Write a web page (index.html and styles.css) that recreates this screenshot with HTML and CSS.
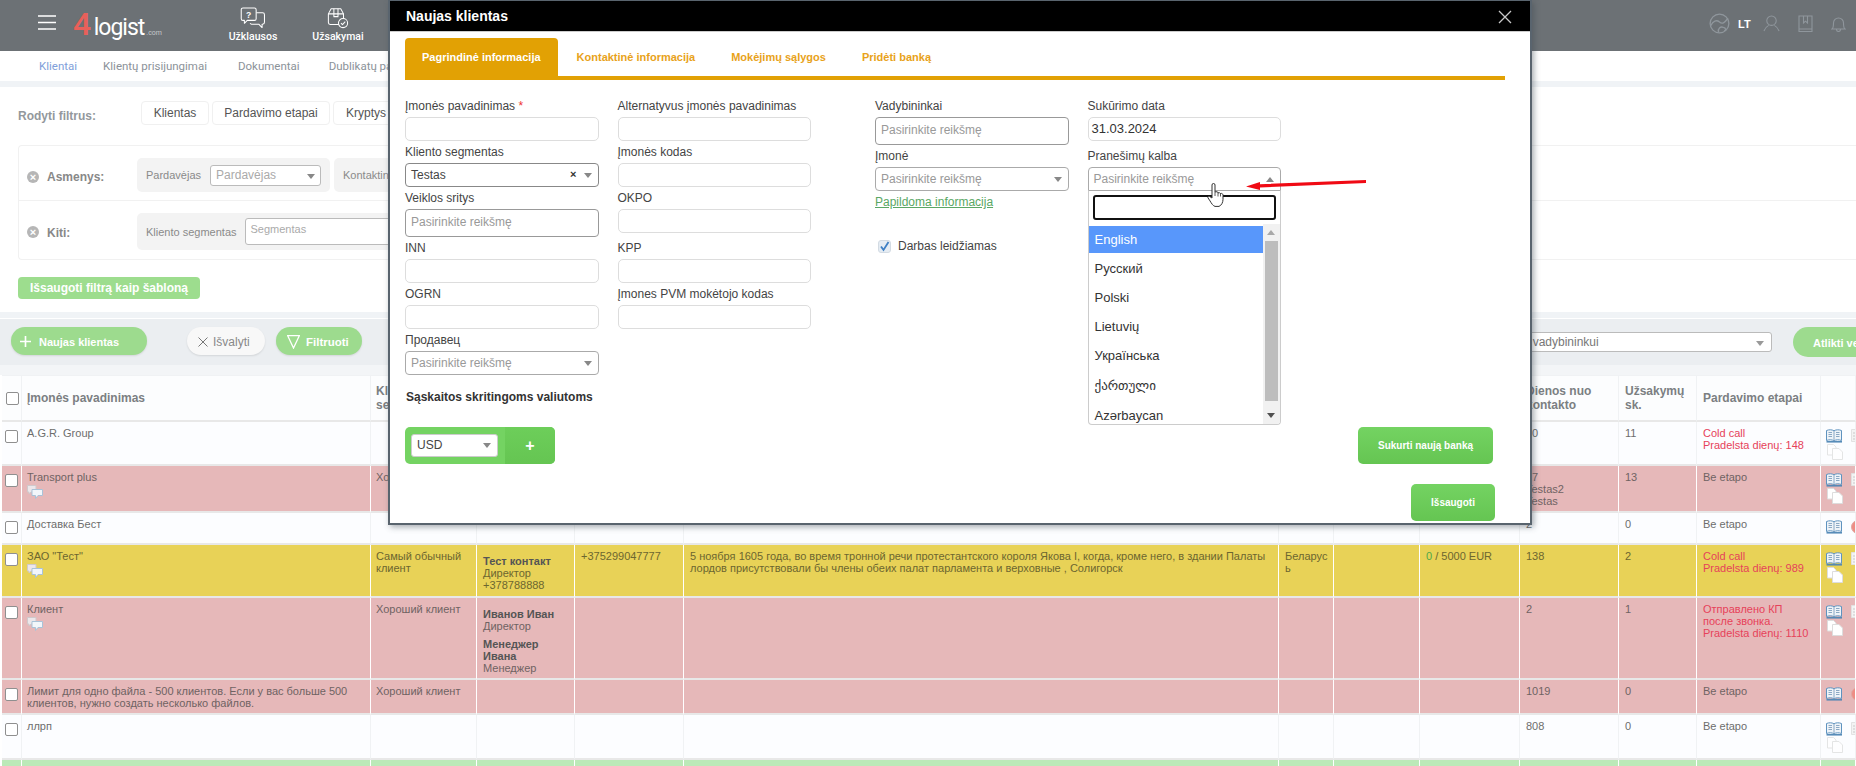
FILE: index.html
```html
<!DOCTYPE html>
<html lang="lt">
<head>
<meta charset="utf-8">
<title>Klientai</title>
<link rel="stylesheet" href="styles.css">
</head>
<body>
<div class="page">
  <header class="topbar">
    <svg class="burger" viewBox="0 0 18 15" width="18" height="15"><path d="M0 1h18M0 7.5h18M0 14h18" stroke="#fff" stroke-width="1.4" fill="none"/></svg>
    <div class="logo"><span class="logo-four">4</span><span class="logo-word">logist</span><span class="logo-com">.com</span></div>
    <nav class="mainnav">
      <a class="mainnav-item first">
        <svg viewBox="0 0 26 23" width="26" height="23" fill="none" stroke="#fff" stroke-width="1.1" stroke-linejoin="round"><path d="M2.5 1h12a1.8 1.8 0 0 1 1.8 1.8v9.400a1.800 1.800 0 0 1-1.800 1.800H7l-3 3v-3H2.500A1.800 1.800 0 0 1 .7 12.200V2.800A1.800 1.800 0 0 1 2.500 1z"/><path d="M16.500 6h6.500a2 2 0 0 1 2 2v8a2 2 0 0 1-2 2h-.5v3.500l-3.500-3.500h-7.500a2 2 0 0 1-1.500-1"/><text x="8.500" y="11" font-size="9" font-weight="700" fill="#fff" stroke="none" text-anchor="middle" font-family="Liberation Sans">?</text></svg>
        <span>Užklausos</span>
      </a>
      <a class="mainnav-item second">
        <svg viewBox="0 0 24 24" width="24" height="24" fill="none" stroke="#fff" stroke-width="1.1" stroke-linejoin="round"><path d="M13 19H3.500A2 2 0 0 1 1.500 17V7.500L4.500 2h10.500l3 5.500v5"/><path d="M1.500 7.500h16.500M7.500 2v8.500h4.500V2"/><circle cx="17.500" cy="17.500" r="5"/><path d="M15.200 17.500l1.700 1.700 3-3.200"/></svg>
        <span>Užsakymai</span>
      </a>
    </nav>
    <div class="topright">
      <svg viewBox="0 0 22 22" width="21" height="21" fill="none" stroke="#8f969c" stroke-width="1.4"><circle cx="11" cy="11" r="9.800"/><path d="M2 13c2-5 6-6 9-3.500s5 1 9-4M10 20c-1-4 2-6 5-5 3 .5 3 3 1 4"/></svg>
      <span class="lang">LT</span>
      <svg class="tr-user" viewBox="0 0 18 18" width="17" height="17" fill="none" stroke="#8f969c" stroke-width="1.1"><circle cx="9" cy="6" r="5"/><path d="M1 17c1.500-4 4-5.500 5-6M17 17c-1.500-4-4-5.500-5-6"/></svg>
      <svg class="tr-book" viewBox="0 0 15 17" width="15" height="17" fill="none" stroke="#8f969c" stroke-width="1.1"><path d="M1 1h13v13H1zM1 14v2.500h13V14M5.500 1v7l2-1.800 2 1.800V1"/></svg>
      <svg class="tr-bell" viewBox="0 0 15 17" width="15" height="17" fill="none" stroke="#8f969c" stroke-width="1.1"><path d="M1 14c1.500-1 1.500-3 1.500-6a5 5 0 0 1 10 0c0 3 0 5 1.500 6zM5.500 14.500a2 2 0 0 0 4 0"/></svg>
    </div>
  </header>

  <nav class="subnav">
    <a class="active">Klientai</a>
    <a>Klientų prisijungimai</a>
    <a class="sub-doc">Dokumentai</a>
    <a class="sub-dub">Dublikatų paieška</a>
  </nav>

  <section class="panel">
    <div class="chips-row">
      <span class="chips-title">Rodyti filtrus:</span>
      <span class="chip chip-a">Klientas</span>
      <span class="chip chip-b">Pardavimo etapai</span>
      <span class="chip chip-c">Kryptys</span>
    </div>
    <div class="filterbox">
      <div class="filterrow row-a">
        <span class="xicon">×</span><span class="filtername">Asmenys:</span>
        <div class="fbox fbox-a"><span class="fl">Pardavėjas</span><span class="fsel">Pardavėjas</span></div>
        <div class="fbox fbox-b"><span class="fl">Kontaktinis asmuo</span></div>
      </div>
      <div class="filterrow row-b">
        <span class="xicon">×</span><span class="filtername">Kiti:</span>
        <div class="fbox fbox-c"><span class="fl">Kliento segmentas</span><span class="finput">Segmentas</span></div>
      </div>
    </div>
    <button class="savefilter">Išsaugoti filtrą kaip šabloną</button>
  </section>

  <section class="toolbar">
    <button class="pill pill-new"><svg viewBox="0 0 12 12" width="11" height="11"><path d="M6 0v12M0 6h12" stroke="#fff" stroke-width="1.800"/></svg>Naujas klientas</button>
    <button class="pill pill-clear"><svg viewBox="0 0 10 10" width="10" height="10"><path d="M.5.5l9 9M9.500.5l-9 9" stroke="#777" stroke-width="1"/></svg>Išvalyti</button>
    <button class="pill pill-filter"><svg viewBox="0 0 13 14" width="13" height="14" fill="none"><path d="M.7.7h11.600L6.500 13z" stroke="#fff" stroke-width="1.300"/></svg>Filtruoti</button>
    <div class="assign">Priskirti vadybininkui</div>
    <button class="pill pill-act">Atlikti veiksmus</button>
  </section>

  <table class="grid">
    <colgroup>
      <col class="c1"><col class="c2"><col class="c3"><col class="c4"><col class="c5"><col class="c6"><col class="c7"><col class="c8"><col class="c9"><col class="c10"><col class="c11"><col class="c12"><col class="c13">
    </colgroup>
    <thead>
      <tr class="rh">
        <th class="cb"><span class="check hcheck"></span></th><th>Įmonės pavadinimas</th><th>Kliento segmentas</th><th></th><th></th><th></th><th></th><th></th><th></th><th>Dienos nuo kontakto</th><th>Užsakymų sk.</th><th>Pardavimo etapai</th><th></th>
      </tr>
    </thead>
    <tbody>
      <tr class="r1">
        <td class="cb"><span class="check"></span></td><td>A.G.R. Group</td><td></td><td></td><td></td><td></td><td></td><td></td><td></td><td>10</td><td>11</td><td class="late">Cold call<br>Pradelsta dienų: 148</td>
        <td class="act"><svg class="i-book"><use href="#book"/></svg><svg class="i-sq"><use href="#sq"/></svg><svg class="i-copy faint"><use href="#copy"/></svg></td>
      </tr>
      <tr class="r2 pink">
        <td class="cb"><span class="check"></span></td><td>Transport plus<svg class="i-chat"><use href="#chat"/></svg></td><td>Хороший клиент</td><td></td><td></td><td></td><td></td><td></td><td></td><td>17<br>Testas2<br>Testas</td><td>13</td><td>Be etapo</td>
        <td class="act"><svg class="i-book"><use href="#book"/></svg><svg class="i-sq"><use href="#sq"/></svg><svg class="i-copy"><use href="#copy"/></svg></td>
      </tr>
      <tr class="r3">
        <td class="cb"><span class="check"></span></td><td>Доставка Бест</td><td></td><td></td><td></td><td></td><td></td><td></td><td></td><td>2</td><td>0</td><td>Be etapo</td>
        <td class="act"><svg class="i-book"><use href="#book"/></svg><span class="i-del"></span></td>
      </tr>
      <tr class="r4 yellow">
        <td class="cb"><span class="check"></span></td><td>ЗАО "Тест"<svg class="i-chat"><use href="#chat"/></svg></td><td>Самый обычный клиент</td><td class="contact"><b>Тест контакт</b><br>Директор<br>+378788888</td><td>+375299047777</td><td>5 ноября 1605 года, во время тронной речи протестантского короля Якова I, когда, кроме него, в здании Палаты лордов присутствовали бы члены обеих палат парламента и верховные , Солигорск</td><td class="brk">Беларусь</td><td></td><td><span class="zero">0</span> / 5000 EUR</td><td>138</td><td>2</td><td class="late">Cold call<br>Pradelsta dienų: 989</td>
        <td class="act"><svg class="i-book"><use href="#book"/></svg><svg class="i-sq"><use href="#sq"/></svg><svg class="i-copy"><use href="#copy"/></svg></td>
      </tr>
      <tr class="r5 pink">
        <td class="cb"><span class="check"></span></td><td>Клиент<svg class="i-chat"><use href="#chat"/></svg></td><td>Хороший клиент</td><td class="contact"><b>Иванов Иван</b><br>Директор<div class="contact2"><b>Менеджер<br>Ивана</b><br>Менеджер</div></td><td></td><td></td><td></td><td></td><td></td><td>2</td><td>1</td><td class="late">Отправлено КП<br>после звонка.<br>Pradelsta dienų: 1110</td>
        <td class="act"><svg class="i-book"><use href="#book"/></svg><svg class="i-sq"><use href="#sq"/></svg><svg class="i-copy"><use href="#copy"/></svg></td>
      </tr>
      <tr class="r6 pink">
        <td class="cb"><span class="check"></span></td><td>Лимит для одно файла - 500 клиентов. Если у вас больше 500 клиентов, нужно создать несколько файлов.</td><td>Хороший клиент</td><td></td><td></td><td></td><td></td><td></td><td></td><td>1019</td><td>0</td><td>Be etapo</td>
        <td class="act"><svg class="i-book"><use href="#book"/></svg><span class="i-del"></span></td>
      </tr>
      <tr class="r7">
        <td class="cb"><span class="check"></span></td><td>ллрп</td><td></td><td></td><td></td><td></td><td></td><td></td><td></td><td>808</td><td>0</td><td>Be etapo</td>
        <td class="act"><svg class="i-book"><use href="#book"/></svg><svg class="i-sq"><use href="#sq"/></svg><svg class="i-copy faint"><use href="#copy"/></svg></td>
      </tr>
      <tr class="r8 green">
        <td></td><td></td><td></td><td></td><td></td><td></td><td></td><td></td><td></td><td></td><td></td><td></td><td></td>
      </tr>
    </tbody>
  </table>

  <svg class="defs" width="0" height="0">
    <symbol id="book" viewBox="0 0 16 14"><path d="M.5 11.500V1.500C3 .5 6 .5 8 1.800 10 .5 13 .5 15.500 1.500v10C13 10.500 10 10.500 8 11.800 6 10.500 3 10.500.5 11.500z" fill="#eef3f8" stroke="#5f93bf" stroke-width="1"/><path d="M8 1.800v10M2.500 3.500h3.500M2.500 5.500h3.500M2.500 7.500h3.500M10 3.500h3.500M10 5.500h3.500M10 7.500h3.500" stroke="#8aa8c4" stroke-width="1" fill="none"/><path d="M.5 12.800h15.500" stroke="#4f86b5" stroke-width="1.500"/></symbol>
    <symbol id="sq" viewBox="0 0 10 14"><path d="M.5.5h12v12H.5z" fill="#f3f3f3" stroke="#e2e2e2"/><path d="M2 4h10M2 7h10M2 10h10" stroke="#c9c9c9"/></symbol>
    <symbol id="copy" viewBox="0 0 16 16"><path d="M.5.5h6l2.500 2.500v8H.5z" fill="#fff" stroke="#ddd"/><path d="M5.500 4.500h6.500l3.500 3.500v7.500H5.500z" fill="#fff" stroke="#ddd"/></symbol>
    <symbol id="chat" viewBox="0 0 16 14"><path d="M.5.5h8.500v6.500H4l-2 2V7H.5z" fill="#ece7ea" stroke="#cfc9cc"/><path d="M5 4.500h10.500v6h-4.500l-2.500 3v-3H5z" fill="#f2f6fa" stroke="#a9c3d8"/></symbol>
  </svg>

  <div class="modal">
    <div class="modal-title">Naujas klientas
      <svg class="modal-close" viewBox="0 0 14 14" width="14" height="14"><path d="M1 1l12 12M13 1L1 13" stroke="#c8c8c8" stroke-width="1.300"/></svg>
    </div>
    <div class="tabs">
      <a class="tab tab-on">Pagrindinė informacija</a>
      <a class="tab tab-second">Kontaktinė informacija</a>
      <a class="tab">Mokėjimų sąlygos</a>
      <a class="tab">Pridėti banką</a>
    </div>
    <div class="formarea">
      <div class="formgrid">
        <div class="field"><label>Įmonės pavadinimas <em>*</em></label><div class="inp"></div></div>
        <div class="field"><label>Alternatyvus įmonės pavadinimas</label><div class="inp"></div></div>
        <div class="field"><label>Kliento segmentas</label><div class="sel dark">Testas<i class="clr">×</i></div></div>
        <div class="field"><label>Įmonės kodas</label><div class="inp"></div></div>
        <div class="field"><label>Veiklos sritys</label><div class="multi">Pasirinkite reikšmę</div></div>
        <div class="field"><label>OKPO</label><div class="inp"></div></div>
        <div class="field"><label>INN</label><div class="inp"></div></div>
        <div class="field"><label>KPP</label><div class="inp"></div></div>
        <div class="field"><label>OGRN</label><div class="inp"></div></div>
        <div class="field"><label>Įmones PVM mokėtojo kodas</label><div class="inp"></div></div>
        <div class="field"><label>Продавец</label><div class="sel">Pasirinkite reikšmę</div></div>
      </div>
      <div class="formside">
        <div class="formgrid side">
          <div class="field"><label>Vadybininkai</label><div class="multi">Pasirinkite reikšmę</div></div>
          <div class="field"><label>Sukūrimo data</label><div class="inp val">31.03.2024</div></div>
          <div class="field"><label>Įmonė</label><div class="sel">Pasirinkite reikšmę</div><a class="morelink">Papildoma informacija</a>
            <div class="allowed"><span class="tick"><svg viewBox="0 0 13 13" width="13" height="13"><path d="M3 6.500l2.500 3.500 5-8" fill="none" stroke="#3e7fc4" stroke-width="1.800"/></svg></span>Darbas leidžiamas</div>
          </div>
          <div class="field langfield"><label>Pranešimų kalba</label><div class="sel open">Pasirinkite reikšmę</div>
            <div class="drop">
              <div class="dropsearch"></div>
              <div class="droplist">
                <ul>
                  <li class="hl">English</li>
                  <li>Русский</li>
                  <li>Polski</li>
                  <li>Lietuvių</li>
                  <li>Українська</li>
                  <li class="li-ka">ქართული</li>
                  <li class="li-az">Azərbaycan</li>
                </ul>
                <div class="scroll"><span class="sc-up"></span><span class="sc-thumb"></span><span class="sc-dn"></span></div>
              </div>
            </div>
          </div>
        </div>
      </div>
    </div>
    <h4 class="accounts">Sąskaitos skritingoms valiutoms</h4>
    <div class="bankrow">
      <div class="curbox"><div class="cursel">USD</div><span class="curadd">+</span></div>
      <button class="gbtn newbank">Sukurti naują banką</button>
    </div>
    <div class="savebar"><button class="gbtn save">Išsaugoti</button></div>
  </div>

  <svg class="redarrow" viewBox="0 0 120 10" width="120" height="10"><path d="M0 6.500L14 2V4.200L120 0V3L14 7.500V10z" fill="#f00a14"/></svg>
  <svg class="hand" viewBox="0 0 18 25" width="18" height="25"><path d="M5 13V3a1.500 1.500 0 0 1 3 0v7l1-.3 1.500.2.500 1 1.500-.2.800.8 1.200-.1c1 .2 1.500.8 1.500 2v4c0 3-1.500 6-4 7H8c-2-.5-3.500-3-5-5.500l-2-3c-.5-1 .5-2 1.500-1.500L5 16z" fill="#fff" stroke="#333" stroke-width="1"/><path d="M8 10v4M11 11v3.500M13.500 11.500v3" stroke="#333" stroke-width=".8" fill="none"/></svg>
</div>
</body>
</html>
```
FILE: styles.css
```css
* { box-sizing: border-box; }
html, body { margin: 0; padding: 0; height: 100%; overflow: hidden; }
body { font: 12px/12px "Liberation Sans", "DejaVu Sans", sans-serif; color: #666; background: #fff; }
a { text-decoration: none; }
button { font: inherit; border: 0; cursor: pointer; }
.page { position: relative; width: 1856px; height: 766px; overflow: hidden; background: #fff; }
.defs { position: absolute; }

/* top bar */
.topbar { height: 51px; background: #6c7175; display: flex; align-items: flex-start; color: #fff; }
.burger { margin: 15px 0 0 38px; flex: none; }
.logo { margin: 9px 0 0 17px; width: 89px; height: 32px; display: flex; align-items: baseline; flex: none; }
.logo-four { font: 500 32px/30px Roboto, sans-serif; color: #e8605a; width: 21px; }
.logo-word { font: 400 23px/30px Roboto, sans-serif; color: #fff; letter-spacing: -1px; }
.logo-com { font: 400 7px/30px Roboto, sans-serif; color: #c4c7ca; margin-left: 2px; }
.mainnav { display: flex; margin-left: 68px; }
.mainnav-item { display: flex; flex-direction: column; align-items: center; color: #fff; font: 500 10.5px/12px Roboto, sans-serif; }
.mainnav-item.first { width: 46px; padding-top: 7px; }
.mainnav-item.second { width: 50px; margin-left: 37px; padding-top: 7px; }
.mainnav-item svg { height: 22px; margin-bottom: 2px; flex: none; }
.topright { margin-left: auto; display: flex; align-items: center; height: 47px; padding-right: 10px; }
.lang { font: 700 11px/12px "Liberation Sans", sans-serif; color: #fff; margin: 0 0 0 8px; width: 12px; }
.tr-user { margin-left: 13px; }
.tr-book { margin-left: 18px; }
.tr-bell { margin-left: 18px; }

/* sub navigation */
.subnav { height: 30px; display: flex; align-items: center; padding-left: 39px; gap: 26px; font: 400 11.5px/14px Roboto, sans-serif; color: #8b9299; }
.subnav .active { color: #7f9fda; }
.subnav .sub-doc { margin-left: 5px; }
.subnav .sub-dub { margin-left: 3px; }

/* filter panel */
.panel { margin-top: 0; border-top: 6px solid #f0f3f6; height: 231px; padding: 14px 0 0 18px; background: #fff; }
.chips-row { display: flex; align-items: center; height: 24px; }
.chips-title { width: 123px; margin-top: 5px; font: 700 12px/14px "Liberation Sans", sans-serif; color: #93989c; }
.chip { height: 24px; border: 1px solid #f0f0f0; border-radius: 4px; line-height: 22px; color: #555; margin-right: 3px; flex: none; text-align: center; white-space: nowrap; }
.chip-a { width: 68px; }
.chip-b { width: 118px; }
.chip-c { width: 66px; }
.filterbox { margin-top: 20px; height: 115px; border: 1px solid #f1f1f1; border-radius: 4px 0 0 4px; border-right: 0; }
.filterrow { display: flex; padding: 12px 0 0 8px; }
.row-a { height: 55px; border-bottom: 1px solid #f1f1f1; }
.row-b { height: 58px; }
.xicon { width: 12px; height: 12px; border-radius: 50%; background: #b6b6b6; color: #fff; font: 700 11px/12px "Liberation Sans", sans-serif; text-align: center; margin-top: 13px; flex: none; }
.filtername { width: 90px; margin-left: 8px; font: 700 12px/38px "Liberation Sans", sans-serif; color: #888; flex: none; }
.row-b .filtername { line-height: 40px; }
.fbox { background: #f3f3f3; border-radius: 5px; display: flex; align-items: center; padding-left: 9px; height: 34px; font-size: 11px; color: #8a8a8a; flex: none; }
.fbox-a { width: 193px; }
.fbox-b { width: 200px; margin-left: 4px; }
.fbox-c { width: 500px; height: 37px; }
.fl { white-space: nowrap; }
.fsel { margin-left: 9px; width: 111px; height: 21px; background: #fff; border: 1px solid #bbb; border-radius: 3px; font-size: 12px; line-height: 19px; padding-left: 5px; color: #aaa; position: relative; }
.fsel::after { content: ""; position: absolute; right: 5px; top: 8px; border: 4px solid transparent; border-top: 5px solid #888; border-bottom: 0; }
.finput { margin-left: 8px; width: 300px; height: 27px; background: #fff; border: 1px solid #bbb; border-radius: 3px; line-height: 21px; padding-left: 5px; color: #aaa; }
.savefilter { display: block; margin-top: 17px; width: 182px; height: 22px; background: #9ddd8e; color: #fff; font: 700 12px/22px "Liberation Sans", sans-serif; border-radius: 4px; padding: 0; }

/* toolbar */
.toolbar { height: 63px; border-top: 6px solid #f0f3f6; display: flex; align-items: flex-start; background: linear-gradient(#ebeef1 47px, #f3f5f7 47px); padding-top: 9px; box-shadow: inset 0 1px 0 #fff; }
.pill { height: 28px; border-radius: 14px; display: flex; align-items: center; color: #fff; font: 700 11px/14px "Liberation Sans", sans-serif; flex: none; padding: 1px 0 0; box-shadow: 0 1px 2px rgba(0,0,0,.1); }
.pill-new { margin-left: 11px; width: 136px; background: #9ddb8e; padding-left: 9px; gap: 8px; }
.pill-clear { margin-left: 40px; width: 78px; background: #f8f8f8; color: #888; font-size: 12px; font-weight: 400; padding-left: 11px; gap: 5px; }
.pill-filter { margin-left: 11px; width: 86px; background: #9ddb8e; padding-left: 11px; gap: 6px; font-size: 11.5px; }
.assign { margin-left: auto; margin-top: 5px; width: 294px; height: 20px; background: #fff; border: 1px solid #bbb; border-radius: 3px; line-height: 18px; padding-left: 11px; color: #777; position: relative; }
.assign::after { content: ""; position: absolute; right: 7px; top: 8px; border: 4px solid transparent; border-top: 5px solid #999; border-bottom: 0; }
.pill-act { margin-left: 21px; width: 100px; height: 30px; border-radius: 15px 0 0 15px; background: #9ddb8e; padding-left: 20px; white-space: nowrap; overflow: hidden; margin-right: -37px; box-shadow: none; }

/* table */
.grid { table-layout: fixed; width: 1854px; margin-left: 2px; border-collapse: separate; border-spacing: 0; }
.c1 { width: 20px; } .c2 { width: 349px; } .c3 { width: 106px; } .c4 { width: 98px; } .c5 { width: 109px; }
.c6 { width: 595px; } .c7 { width: 55px; } .c8 { width: 86px; } .c9 { width: 100px; } .c10 { width: 99px; }
.c11 { width: 78px; } .c12 { width: 124px; } .c13 { width: 35px; }
.grid th, .grid td { border-right: 1px solid #f0f2f4; border-bottom: 2px solid #e8e8e8; padding: 5px 5px 0 6px; vertical-align: top; text-align: left; font-weight: 400; overflow: hidden; }
.grid th { vertical-align: middle; padding-top: 0; font: 700 12px/14px "Liberation Sans", sans-serif; color: #7b7f82; background: #fcfdfe; border-top: 1px solid #f0f2f4; }
.grid td { background: #fcfdff; color: #6d6d6d; font-size: 11px; }
.grid th:nth-child(2), .grid td:nth-child(2), .grid td:nth-child(3), .grid th:nth-child(3) { padding-left: 5px; }
.rh { height: 47px; } .r1 { height: 44px; } .r2 { height: 47px; } .r3 { height: 32px; } .r4 { height: 53px; }
.r5 { height: 82px; } .r6 { height: 35px; } .r7 { height: 45px; } .r8 { height: 30px; }
.grid .pink td { background: #e6b8b9; border-right-color: #fff; color: #6f6363; }
.grid .yellow td { background: #e8d257; border-right-color: #fff; color: #6c6630; }
.grid .green td { background: #bce9b8; border-right-color: #fff; }
.grid .cb, .grid .pink .cb, .grid .yellow .cb { padding: 8px 0 0 3px; }
.grid th.cb { padding: 0 0 0 4px; }
.check { display: block; width: 13px; height: 13px; background: #fff; border: 1px solid #8f8f8f; border-radius: 2px; }
.i-chat { display: block; width: 16px; height: 14px; margin-top: 2px; }
.grid tr td.late { color: #e6425a; }
.grid tr td.contact { padding-top: 10px; }
.grid .contact b { color: #555; }
.contact2 { margin-top: 6px; }
.zero { color: #4fa84a; }
.brk { word-break: break-all; }
.grid .act { padding: 7px 0 0 5px; position: relative; }
.i-book { position: absolute; left: 5px; top: 7px; width: 16px; height: 14px; }
.i-sq { position: absolute; left: 30px; top: 7px; width: 10px; height: 14px; }
.i-copy { position: absolute; left: 6px; top: 22px; width: 16px; height: 16px; }
.faint { opacity: .75; }
.i-del { position: absolute; left: 30px; top: 7px; width: 14px; height: 14px; border-radius: 50%; background: #ee8c84; border: 1px solid #e0a9a4; }

/* modal */
.modal { position: absolute; left: 388px; top: 0; width: 1144px; height: 525px; background: #fff; border: 2px solid #59646e; border-top: 1px solid #59646e; box-shadow: 2px 2px 6px rgba(60,70,80,.45); color: #444; }
.modal-title { height: 30px; background: #000; color: #fff; font: 700 14px/31px "Liberation Sans", sans-serif; padding-left: 16px; position: relative; box-shadow: 0 1px 0 #ccc; }
.modal-close { position: absolute; right: 18px; top: 9px; }
.tabs { margin: 7px 25px 0 15px; height: 42px; border-bottom: 4px solid #e2a104; display: flex; }
.tab { height: 38px; padding: 0 18px; font: 700 11px/38px "Liberation Sans", sans-serif; color: #e8a21a; white-space: nowrap; }
.tab-on { background: #e2a104; color: #fff; height: 42px; border-radius: 4px 4px 0 0; padding: 0 17px; }
.tab-second { padding-left: 19px; }
.formarea { display: flex; margin: 15px 0 0 15px; }
.formgrid { display: grid; grid-template-columns: 193.500px 193.500px; column-gap: 19px; align-items: start; }
.formside { margin-left: 64px; }
.field { display: flex; flex-direction: column; }
.field label { height: 22px; font: 12px/22px "Liberation Sans", sans-serif; color: #444; white-space: nowrap; }
.field em { color: #e33; font-style: normal; }
.inp { height: 24px; background: #fff; border: 1px solid #ddd; border-radius: 5px; font-size: 13px; line-height: 22px; padding-left: 3px; color: #333; }
.sel { height: 24px; background: #fff; border: 1px solid #aaa; border-radius: 4px; color: #999; line-height: 22px; padding-left: 5px; position: relative; }
.sel.dark { color: #444; border-color: #888; }
.sel::after { content: ""; position: absolute; right: 6px; top: 9px; border: 4px solid transparent; border-top: 5px solid #888; border-bottom: 0; }
.sel.open { border-radius: 4px 4px 0 0; }
.sel.open::after { border-top: 0; border-bottom: 5px solid #888; }
.clr { position: absolute; right: 21px; top: -1px; font: 700 11px/22px "Liberation Sans", sans-serif; color: #333; }
.multi { height: 28px; background: #fff; border: 1px solid #999; border-radius: 4px; color: #999; line-height: 25px; padding-left: 5px; }
.morelink { margin-top: 5px; font-size: 12px; line-height: 12px; color: #5aa764; text-decoration: underline; }
.allowed { display: flex; align-items: center; margin: 31px 0 0 3px; height: 14px; color: #444; gap: 7px; }
.tick { width: 13px; height: 13px; background: #e5ecf3; border: 1px solid #d3dbe3; border-radius: 3px; display: flex; }
.tick svg { flex: none; margin: -1px; }
.langfield { position: relative; }
.drop { position: absolute; left: 0; right: 0; top: 45.500px; height: 234px; background: #fff; border: 1px solid #ccc; border-top: 0; border-radius: 0 0 4px 4px; overflow: hidden; }
.dropsearch { margin: 4px; height: 25px; border: 2px solid #111; border-radius: 3px; background: #fff; }
.droplist { display: flex; height: 200px; position: relative; }
.droplist ul { list-style: none; margin: 2px 0 0; padding: 0; flex: 1; }
.droplist li { height: 27px; margin-bottom: 2px; font: 13px/27px "Liberation Sans", "DejaVu Sans", sans-serif; padding-left: 6px; color: #333; }
.droplist li.hl { background: #5897fb; color: #fff; }
.droplist li.li-ka, .droplist li.li-az { position: relative; top: 1px; }
.droplist li.li-az { top: 2px; }
.scroll { width: 17px; background: #f1f1f1; position: relative; flex: none; }
.sc-thumb { position: absolute; left: 2px; right: 2px; top: 17px; height: 160px; background: #bdbdbd; }
.sc-up, .sc-dn { position: absolute; left: 4px; border: 4px solid transparent; }
.sc-up { top: 6px; border-top: 0; border-bottom: 5px solid #a8a8a8; }
.sc-dn { bottom: 6px; border-bottom: 0; border-top: 5px solid #505050; }
.accounts { margin: 14px 0 0 16px; font: 700 12px/16px "Liberation Sans", sans-serif; color: #333; }
.bankrow { display: flex; justify-content: space-between; margin: 22px 37px 0 15px; height: 37px; }
.curbox { width: 150px; height: 37px; background: #74d362; border-radius: 5px; display: flex; align-items: center; overflow: hidden; }
.cursel { margin-left: 6px; width: 87px; height: 23px; background: #fff; border: 1px solid #ccc; border-radius: 3px; font: 12px/21px "Liberation Sans", sans-serif; color: #444; padding-left: 5px; position: relative; }
.cursel::after { content: ""; position: absolute; right: 6px; top: 8px; border: 4px solid transparent; border-top: 5px solid #888; border-bottom: 0; }
.curadd { margin-left: 7px; width: 50px; height: 37px; background: linear-gradient(#6dce5a, #65c552); color: #fff; text-align: center; font: 700 16px/37px "Liberation Sans", sans-serif; }
.gbtn { height: 37px; border-radius: 5px; background: linear-gradient(#74d362, #65c552); color: #fff; font: 700 10px/37px "Liberation Sans", sans-serif; padding: 0; }
.newbank { width: 135px; }
.savebar { display: flex; justify-content: flex-end; margin: 20px 35px 0 0; }
.save { width: 84px; }

/* overlay marks */
.redarrow { position: absolute; left: 1246px; top: 180px; }
.hand { position: absolute; left: 1207px; top: 182px; }
```
